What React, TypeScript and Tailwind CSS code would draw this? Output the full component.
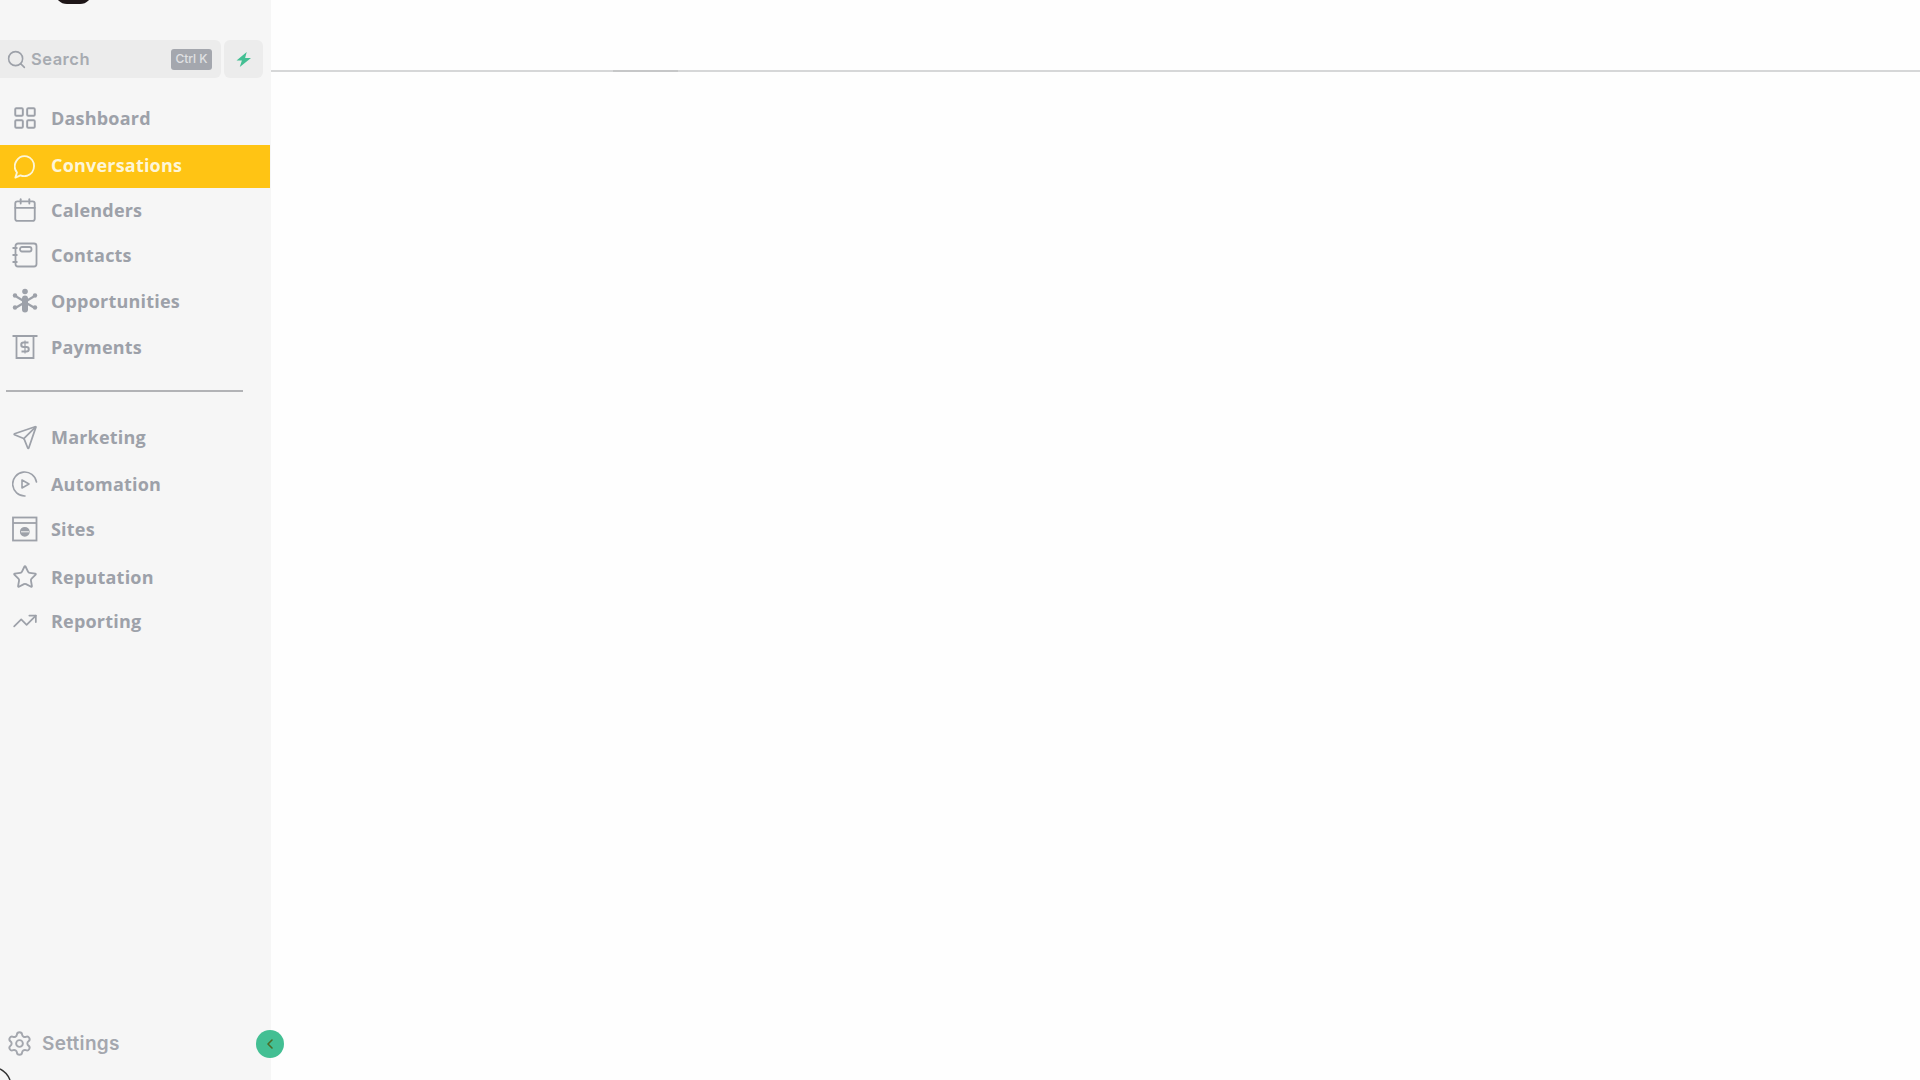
import { LayoutGrid, Search, Send, Star, TrendingUp, Settings, ChevronLeft, Calendar } from "lucide-react"
import type { ReactNode } from "react"

const iconCls = "w-[26px] h-[26px] text-[#9da1a9]"

function ChatIcon() {
  return (
    <svg viewBox="0 0 26 26" fill="none" stroke="currentColor" strokeWidth="2" strokeLinejoin="round" className="ml-[2px] h-[26px] w-[26px] text-[#fdf6d8]">
      <path d="M14 1.500a11 11 0 0 1 0 21c-2.500.6-5 .4-7-.5L1.500 24.500 3.200 19A11 11 0 0 1 14 1.500z" />
    </svg>
  )
}

function ContactsIcon() {
  return (
    <svg viewBox="0 0 26 26" fill="none" stroke="currentColor" strokeWidth="1.8" className={iconCls}>
      <rect x="3.500" y="1.500" width="21" height="23" rx="2.500" />
      <rect x="8" y="5" width="11.500" height="4.500" rx="2" />
      <path d="M0.500 6h5M0.500 13h5M0.500 20h5" />
    </svg>
  )
}

function OpportunitiesIcon() {
  return (
    <svg viewBox="0 0 26 26" fill="currentColor" className={iconCls}>
      <circle cx="13" cy="3.500" r="2.800" />
      <rect x="10" y="7.500" width="6" height="17" rx="3" />
      <g stroke="currentColor" strokeWidth="2.200" strokeLinecap="round">
        <path d="M10 12 5 9M16 12l5-3M10 16l-5 3M16 16l5 3" />
      </g>
      <circle cx="3" cy="7.500" r="2.200" />
      <circle cx="23" cy="7.500" r="2.200" />
      <circle cx="3" cy="19.500" r="2.200" />
      <circle cx="23" cy="19.500" r="2.200" />
    </svg>
  )
}

function PaymentsIcon() {
  return (
    <svg viewBox="0 0 26 26" fill="none" stroke="currentColor" strokeWidth="1.800" className={iconCls}>
      <path d="M0.500 2h25M4.500 2v22h17V2" />
      <path d="M16.500 8.500h-5a2 2 0 0 0 0 4.500h3a2 2 0 0 1 0 4.500h-5" strokeWidth="2" />
      <path d="M13 6.500v13" strokeWidth="1.200" />
    </svg>
  )
}

function AutomationIcon() {
  return (
    <svg viewBox="0 0 26 26" fill="none" stroke="currentColor" strokeWidth="1.600" className={iconCls}>
      <path d="M24.500 11A12 12 0 1 0 13 25" strokeLinecap="round" />
      <path d="M10 9v8l7-4z" strokeLinejoin="round" />
    </svg>
  )
}

function SitesIcon() {
  return (
    <svg viewBox="0 0 26 26" fill="none" stroke="currentColor" strokeWidth="1.800" className={iconCls}>
      <rect x="1" y="1.500" width="23.500" height="23" />
      <path d="M1 7h23.500" />
      <circle cx="12.800" cy="15.800" r="4" fill="currentColor" />
      <path d="M9 15.800h8" stroke="#f6f6f6" strokeWidth="1" />
    </svg>
  )
}

type NavItem = { label: string; icon: ReactNode; row: string; text?: string; active?: boolean }

const mainItems: NavItem[] = [
  { label: "Dashboard", icon: <LayoutGrid strokeWidth={1.8} className={iconCls} />, row: "h-[44px]" },
  { label: "Conversations", icon: <ChatIcon />, row: "h-[43px] mt-[5px] mr-[1px]", text: "-mt-[4px]", active: true },
  { label: "Calenders", icon: <Calendar strokeWidth={1.7} className={iconCls} />, row: "h-[44px]" },
  { label: "Contacts", icon: <ContactsIcon />, row: "h-[46px]" },
  { label: "Opportunities", icon: <OpportunitiesIcon />, row: "h-[46px]", text: "-mt-[1px]" },
  { label: "Payments", icon: <PaymentsIcon />, row: "h-[46px]" },
]

const secondItems: NavItem[] = [
  { label: "Marketing", icon: <Send strokeWidth={1.6} className="w-[27px] h-[27px] text-[#9da1a9]" />, row: "h-[46px]" },
  { label: "Automation", icon: <AutomationIcon />, row: "h-[48px]" },
  { label: "Sites", icon: <SitesIcon />, row: "h-[42px]" },
  { label: "Reputation", icon: <Star strokeWidth={1.7} className={iconCls} />, row: "h-[54px]" },
  { label: "Reporting", icon: <TrendingUp strokeWidth={1.6} className={iconCls} />, row: "h-[34px]" },
]

function Row({ item }: { item: NavItem }) {
  return (
    <div className={`${item.row} flex items-center pl-[12px] gap-[13px] ${item.active ? "bg-[#ffc414] text-[#fdf6d8]" : "text-[#9da1a9]"}`}>
      <span className="w-[26px] flex justify-center shrink-0">{item.icon}</span>
      <span className={`text-[18px] font-bold leading-none tracking-[0.2px] ${item.text ?? ""}`}>{item.label}</span>
    </div>
  )
}

export default function App() {
  return (
    <div className="relative flex h-screen w-full overflow-hidden bg-[#fefefe] font-['Open_Sans',sans-serif]">
      <aside className="relative flex w-[271px] shrink-0 flex-col bg-[#f6f6f6] pt-[40px]">
        {/* cut off logo at the very top */}
        <div className="absolute left-[55px] top-[-20px] h-[24px] w-[37px] rounded-full bg-[#1d1517]" />

        <div className="flex h-[38px] gap-[3px]">
          <div className="flex w-[221px] items-center rounded-r-[6px] bg-[#ececec] pl-[6px] pr-[9px]">
            <Search strokeWidth={1.8} className="h-[21px] w-[21px] text-[#9da1a9]" />
            <span className="ml-[4px] font-['Inter',sans-serif] text-[16.5px] font-semibold tracking-[0.5px] text-[#a7abb1]">Search</span>
            <span className="ml-auto flex h-[21px] w-[41px] items-center justify-center rounded-[3px] bg-[#a4a7ae] font-['Inter',sans-serif] text-[12px] font-medium text-[#e0e1e3]">Ctrl K</span>
          </div>
          <div className="flex w-[39px] items-center justify-center rounded-[6px] bg-[#ececec]">
            <svg viewBox="0 0 14 14" className="h-[15px] w-[15px]" fill="#43bf93">
              <path d="M10 0 0.500 8h5L3.500 14 14 5.500H8.500z" />
            </svg>
          </div>
        </div>

        <nav className="mt-[18px] flex flex-col">
          {mainItems.map((item) => (
            <Row key={item.label} item={item} />
          ))}
          <div className="ml-[6px] mt-[20px] mb-[22px] h-[2px] w-[237px] bg-[#b2b3b6]" />
          {secondItems.map((item) => (
            <Row key={item.label} item={item} />
          ))}
        </nav>

        <div className="mt-auto mb-[20px] flex h-[32px] items-center gap-[9px] pl-[6px] text-[#a4a7ae]">
          <Settings strokeWidth={1.7} className="-mt-[2px] h-[27px] w-[27px]" />
          <span className="font-['Inter',sans-serif] text-[19px] font-semibold tracking-[0.3px]">Settings</span>
        </div>

        <button className="absolute bottom-[22px] right-[-13px] flex h-[28px] w-[28px] items-center justify-center rounded-full bg-[#43bf93]">
          <ChevronLeft strokeWidth={2.4} className="h-[16px] w-[16px] text-[#4d6a26]" />
        </button>

        {/* rounded window corner bottom left */}
        <svg viewBox="0 0 12 12" className="absolute bottom-0 left-0 h-[12px] w-[12px]" fill="none" stroke="#333" strokeWidth="1.500">
          <path d="M0 1C4 3 8 7 10 12" />
        </svg>
      </aside>

      <main className="flex-1">
        <div className="relative mt-[70px] h-[2px] bg-[#d6d7d8]">
          <div className="absolute left-[342px] top-0 h-[2px] w-[65px] bg-[#c6c7c8]" />
        </div>
      </main>
    </div>
  )
}
